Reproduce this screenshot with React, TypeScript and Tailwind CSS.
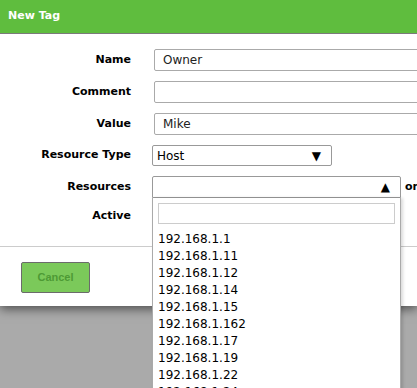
import { useState } from "react";

const hosts = [
  "192.168.1.1",
  "192.168.1.11",
  "192.168.1.12",
  "192.168.1.14",
  "192.168.1.15",
  "192.168.1.162",
  "192.168.1.17",
  "192.168.1.19",
  "192.168.1.22",
  "192.168.1.24",
  "192.168.1.25",
];

function Label({ children }: { children: string }) {
  return (
    <div className="w-[131px] shrink-0 text-right text-[11px] font-bold text-black">
      {children}
    </div>
  );
}

export default function App() {
  const [name, setName] = useState("Owner");
  const [comment, setComment] = useState("");
  const [value, setValue] = useState("Mike");

  return (
    <div
      className="relative h-[388px] w-full overflow-hidden bg-[#aaaaaa] text-[12px] text-[#222]"
      style={{ fontFamily: '"DejaVu Sans", Verdana, sans-serif' }}
    >
      <div className="relative bg-white shadow-[0_3px_10px_rgba(0,0,0,0.55)]">
        {/* Header */}
        <div className="flex h-[34px] items-center border-b border-[#7a7a7a] bg-[#5fbd3e] px-2 text-[11px] font-bold text-white">
          New Tag
        </div>

        {/* Form */}
        <div className="flex flex-col gap-[10px] pt-[15px] pb-[20px]">
          <div className="flex items-center gap-[23px]">
            <Label>Name</Label>
            <input
              value={name}
              onChange={(e) => setName(e.target.value)}
              className="h-[22px] w-[300px] shrink-0 rounded-[2px] border border-[#aaaaaa] px-2 text-[12px] outline-none"
            />
          </div>
          <div className="flex items-center gap-[23px]">
            <Label>Comment</Label>
            <input
              value={comment}
              onChange={(e) => setComment(e.target.value)}
              className="h-[22px] w-[300px] shrink-0 rounded-[2px] border border-[#aaaaaa] px-2 text-[12px] outline-none"
            />
          </div>
          <div className="flex items-center gap-[23px]">
            <Label>Value</Label>
            <input
              value={value}
              onChange={(e) => setValue(e.target.value)}
              className="h-[22px] w-[300px] shrink-0 rounded-[2px] border border-[#aaaaaa] px-2 text-[12px] outline-none"
            />
          </div>
          <div className="flex items-center gap-[21px]">
            <Label>Resource Type</Label>
            <div className="flex h-[21px] w-[180px] items-center justify-between rounded-[2px] border border-[#999999] pr-[10px] pl-[4px] text-black">
              <span>Host</span>
              <span className="text-[12px] leading-none">▼</span>
            </div>
          </div>
          <div className="flex items-center gap-[21px]">
            <Label>Resources</Label>
            <div className="relative flex items-center">
              <div className="flex h-[22px] w-[249px] items-center justify-end rounded-t-[2px] border border-[#999999] pr-[10px] text-black">
                <span className="text-[12px] leading-none">▲</span>
              </div>
              <span className="ml-[4px] text-[11px] font-bold text-black">or</span>

              {/* Open dropdown */}
              <div className="absolute top-full left-0 z-10 w-[249px] border border-t-0 border-[#aaaaaa] bg-white px-[5px] pt-[5px] shadow-[2px_0_3px_rgba(0,0,0,0.15)]">
                <div className="h-[21px] w-full border border-[#cccccc]" />
                <ul className="mt-[7px] text-[12px] leading-[17px] text-black">
                  {hosts.map((h) => (
                    <li key={h}>{h}</li>
                  ))}
                </ul>
              </div>
            </div>
          </div>
          <div className="-mt-[2px] flex h-[20px] items-center gap-[23px]">
            <Label>Active</Label>
          </div>
        </div>

        {/* Footer */}
        <div className="border-t border-[#cccccc] pt-[15px] pb-[13px] pl-[21px]">
          <button
            className="h-[31px] w-[69px] rounded-[2px] border border-[#6b6b6b] bg-[#7bc95a] text-[11px] font-bold text-[#4e9a35]"
            style={{ fontFamily: '"Liberation Sans", Arial, sans-serif' }}
          >
            Cancel
          </button>
        </div>
      </div>
    </div>
  );
}
